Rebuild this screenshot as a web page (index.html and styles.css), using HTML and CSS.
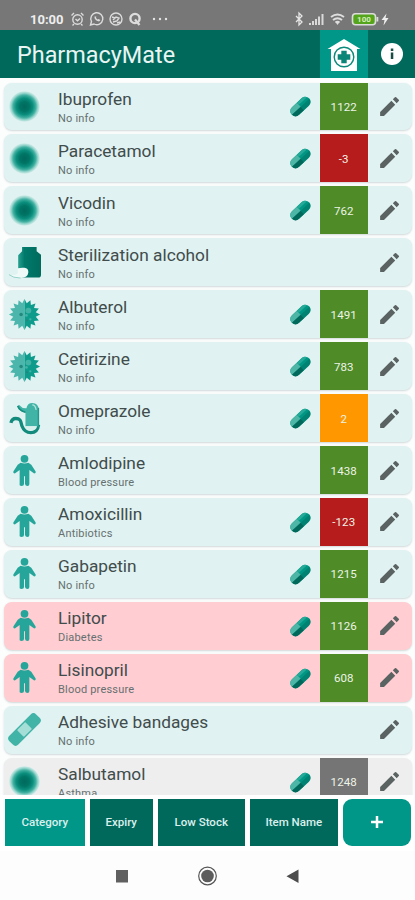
FILE: index.html
```html
<!DOCTYPE html>
<html lang="en">
<head>
<meta charset="utf-8">
<title>PharmacyMate</title>
<link rel="stylesheet" href="styles.css">
</head>
<body>
<svg class="defs" width="0" height="0" aria-hidden="true">
  <defs>
    <radialGradient id="dotfill">
      <stop offset="0" stop-color="#00695c"/><stop offset=".32" stop-color="#007566"/>
      <stop offset=".55" stop-color="#0b8f7e"/><stop offset=".74" stop-color="#41b0a1"/>
      <stop offset=".88" stop-color="#9bd7cf"/><stop offset="1" stop-color="#d2edea"/>
    </radialGradient>
    <linearGradient id="jar"><stop offset="0" stop-color="#26a08f"/><stop offset=".28" stop-color="#00796b"/><stop offset="1" stop-color="#006b5d"/></linearGradient>
    <symbol id="dot" viewBox="0 0 34 34"><circle cx="17" cy="17" r="15.800" fill="url(#dotfill)"/></symbol>
    <symbol id="bottle" viewBox="0 0 34 34">
      <path fill="url(#jar)" d="M14.500 1h15v4.500l4.500 3.500v20.500q0 3-3 3H13q-2.500 0-2.500-3V9.500l4-4z"/>
      <path fill="#eef9f8" d="M1 29q4 2 9-.5V23q4-1 7-.5 4 .5 4 4.500-.5 5.500-8 6-8 0-12-4z"/>
      <path fill="none" stroke="#7cc7be" stroke-width=".8" d="M1 29.500q4 3.500 12 3.500"/>
    </symbol>
    <symbol id="virus" viewBox="0 0 34 34">
      <path fill="#4db6ac" transform="matrix(-1 0 0 1 34 0)" d="M17 1l2.300 4.400L23.100 2.200l.5 5 4.700-1.500-1.500 4.700 5 .5-3.200 3.800L33 17l-4.400 2.300 3.200 3.800-5 .5 1.500 4.700-4.700-1.500-.5 5-3.800-3.200L17 33z"/>
      <path fill="#0d9c8c" d="M17 1l2.300 4.400L23.100 2.200l.5 5 4.700-1.500-1.500 4.700 5 .5-3.200 3.800L33 17l-4.400 2.300 3.200 3.800-5 .5 1.500 4.700-4.700-1.500-.5 5-3.800-3.200L17 33z"/>
      <g fill="#22897e"><circle cx="13.500" cy="17" r="1.800"/><circle cx="19.500" cy="23" r="1.200"/></g>
      <g fill="#43b3a6"><circle cx="21" cy="13" r="3"/><circle cx="19" cy="18" r="1.400"/><circle cx="23" cy="22" r="1.200"/></g>
    </symbol>
    <symbol id="stomach" viewBox="0 0 34 34">
      <path fill="none" stroke="#128a7c" stroke-width="3.400" d="M3 21.500Q4 17 8 17c6 0 5 4 6.500 8q2.500 6.500 9 6.500 7 0 8-8"/>
      <path fill="#42b4a7" d="M18 11q-2-.5-4.500-1.500-3-1.500-4-5l2-1.500Q15 7 19 6.500q1-5.500 6-5.500 6.500 0 6.500 7v17H18z"/>
      <path fill="none" stroke="#188f82" stroke-width="1.700" d="M10 4q2 5 8 6.500"/>
      <path fill="#d9f1ee" d="M18 25h12q-1 4.500-6 4.500T18 25z"/>
      <path fill="none" stroke="#219a8d" stroke-width="1.500" d="M31.300 6v20"/>
      <path fill="none" stroke="#b4e2dc" stroke-width="1.300" d="M25 3q3 0 4 5"/>
    </symbol>
    <symbol id="person" viewBox="0 0 34 34">
      <circle cx="17" cy="5" r="4" fill="#26a69a"/>
      <path fill="#26a69a" d="M13 9q4 1.500 8 0l3 2 4.500 7q.5 2-1.500 2l-5-3.500V31q0 2-2 2t-2.500-2v-8h-1v8q0 2-2.500 2t-2-2V16.500L7 20q-2 0-1.500-2l4.500-7z"/>
    </symbol>
    <symbol id="bandage" viewBox="0 0 34 34">
      <g transform="rotate(-45 17 17)"><rect x="-2.500" y="10.500" width="39" height="13" rx="4" fill="#42b3a7"/><rect x="11" y="12" width="12" height="10" rx="1" fill="#a5ded7"/></g>
    </symbol>
    <symbol id="pill" viewBox="0 0 24 24">
      <g transform="rotate(-43 12 12)"><rect x="-.4" y="6.500" width="24.800" height="10.800" rx="5.400" fill="#009684"/>
      <path fill="#006d60" d="M12 12.300h12.300q-.5 5-5.400 5H12z" opacity=".5"/>
      <path fill="#4db6a6" d="M12 6.500H5q-5.400 0-5.400 5.300v.5H12z"/><path fill="#00695c" d="M12 12.300H-.4q.5 5 5.400 5h7z"/>
      <path fill="#25a998" d="M12 6.500h7q3.200 0 4.600 3H12z"/></g>
    </symbol>
    <symbol id="pencil" viewBox="0 0 24 24"><path fill="#5b6262" d="M3 17.300V21h3.700L17.500 10.200 13.800 6.500zM20.900 6.800q.6-.6 0-1.200l-2.500-2.500q-.6-.6-1.200 0l-2 2 3.700 3.700z"/></symbol>
  </defs>
</svg>

<div class="status">
  <span class="clock">10:00</span>
  <svg class="left-icons" viewBox="0 0 100 16" fill="none" stroke="#dcdcdc" stroke-width="1.400">
    <circle cx="7.500" cy="8.500" r="4.700"/><path d="M1.500 4.500L4 2M11 2l2.500 2.500M5.500 8l2 1.800L10 7.500M4 13l-1.500 1.500M11 13l1.500 1.500"/>
    <path d="M20.500 14l1-3.500a6 6 0 1 1 2.500 2.500z"/><path d="M24.500 5.500q-.5 3.500 4.500 5l1.500-1.500-2-1-1 .5-1.500-1.500.3-1.500z" fill="#dcdcdc" stroke="none"/>
    <circle cx="46" cy="8" r="6"/><path d="M43 9l3-3 3 1-2 3-4 1M42 6l3 1M47 12l3-1"/>
    <circle cx="65" cy="7.500" r="4.600" stroke-width="2.400"/><path d="M65 8.500l4.500 5.500" stroke-width="2.300"/>
    <g fill="#e4e4e4" stroke="none"><circle cx="84" cy="8" r="1.200"/><circle cx="90" cy="8" r="1.200"/><circle cx="96" cy="8" r="1.200"/></g>
  </svg>
  <svg class="right-icons" viewBox="0 0 96 16">
    <path d="M2 5l6 6-3 3V2l3 3-6 6" fill="none" stroke="#e6e6e6" stroke-width="1.300"/>
    <g fill="#d9d9d9"><path d="M15 12h2v2h-2zM18 10h2v4h-2zM21 8h2v6h-2zM24 5.500h2v8.500h-2zM27.500 3h2v11h-2z"/></g>
    <g fill="none" stroke="#dedede" stroke-width="1.900"><path d="M37 6q6.500-5 13 0M39 9q4.500-3.500 9 0M41.500 11.500q2-1.500 4 0"/></g><path d="M41.500 11h4l-2 3z" fill="#dedede"/>
    <rect x="58.500" y="2.800" width="23" height="11" rx="3" fill="#55a51c" stroke="#dcdcdc" stroke-width="1.600"/><path d="M82.500 6h1.800v4.500h-1.800z" fill="#dcdcdc"/>
    <text x="70" y="11.300" text-anchor="middle" class="battery">100</text>
    <path d="M92.500 2.500L87.500 9h3l-1 5.500L94.500 7h-3z" fill="#eee"/>
  </svg>
</div>

<header class="bar">
  <h1>PharmacyMate</h1>
  <div class="home"><svg viewBox="0 0 34 34"><path fill="#fff" d="M17 1L33.500 11H30v22H4V11H.5z"/><circle cx="17" cy="19" r="9.800" fill="none" stroke="#0b897b" stroke-width="1.400"/><path fill="#0b8577" d="M14.300 12.700h5.400v3.600h3.600v5.400h-3.600v3.600h-5.400v-3.600h-3.600v-5.400h3.600z"/></svg></div>
  <div class="info"><svg viewBox="0 0 22 22"><circle cx="11" cy="11" r="11" fill="#fff"/><path d="M9.800 5.500h2.500V8H9.800zM9.800 9.500h2.500V16H9.800z" fill="#174d45"/></svg></div>
</header>

<main class="list" id="list"></main>

<div class="filters">
  <button class="category active">Category</button>
  <button class="expiry">Expiry</button>
  <button class="stock">Low Stock</button>
  <button class="name">Item Name</button>
  <button class="add" aria-label="Add"><svg viewBox="0 0 14 14"><path d="M7 1v12M1 7h12" stroke="#fff" stroke-width="2.500"/></svg></button>
</div>

<nav class="sysnav">
  <svg viewBox="0 0 415 50"><rect x="116" y="19" width="12" height="12.500" fill="#606060"/><circle cx="207.500" cy="25" r="8.800" fill="none" stroke="#555" stroke-width="1.200"/><circle cx="207.500" cy="25" r="6.300" fill="#5c5c5c"/><path d="M298.500 18.500v13.500L286.500 25.300z" fill="#4c4c4c"/></svg>
</nav>
<script src="app.js"></script>
</body>
</html>
```

FILE: styles.css
```css
* { box-sizing: border-box; }
body {
  margin: 0;
  width: 415px;
  height: 900px;
  overflow: hidden;
  display: flex;
  flex-direction: column;
  background: #fff;
  font-family: Roboto, sans-serif;
}
.defs { display: block; position: absolute; }
svg { display: block; }

.status {
  height: 30px;
  flex: none;
  display: flex;
  align-items: flex-start;
  padding: 11px 25px 0 30px;
  background: #777;
}
.clock { width: 35px; font-size: 13px; line-height: 17px; font-weight: 700; color: #eee; }
.left-icons { width: 100px; height: 16px; margin-left: 5px; }
.right-icons { width: 96px; height: 16px; margin-left: auto; }
.battery { font: 700 8px Roboto, sans-serif; fill: #d5edbd; }

.bar {
  height: 47.500px;
  flex: none;
  display: flex;
  align-items: center;
  background: #00695c;
}
.bar h1 { flex: 1; margin: 0; padding: 3px 0 0 17px; font-size: 23.400px; font-weight: 400; line-height: 28px; color: #e8f5f3; }
.home { width: 48px; height: 100%; display: grid; place-items: center; background: #009688; }
.home svg { width: 34px; height: 34px; margin-top: 2px; }
.info { width: 47px; display: grid; place-items: center; }
.info svg { width: 22px; height: 22px; margin-top: 1px; }

.list {
  height: 717px;
  flex: none;
  overflow: hidden;
  display: flex;
  flex-direction: column;
  gap: 4px;
  padding: 5px 3px 0 4px;
  background: #fcfefe;
}
.card {
  flex: none;
  height: 47.950px;
  display: flex;
  align-items: center;
  border-radius: 8px;
  background: #e0f2f1;
  box-shadow: 0 1px 2px rgba(60, 80, 80, .22);
}
.card.expired { background: #ffcdd2; }
.card.inactive { background: #eee; }
.kind { width: 33px; height: 33px; margin: 0 1px 0 4px; }
.text { flex: 1; padding: 3px 0 0 16px; }
.title { font-size: 17.300px; line-height: 21px; font-weight: 400; color: #414c4c; white-space: nowrap; }
.note { font-size: 11px; line-height: 17px; letter-spacing: .2px; color: #667070; }
.pill { width: 23px; height: 23px; margin: 1px 8px 0 0; }
.count { width: 47.500px; height: 100%; display: grid; place-items: center; padding-top: 1px; font-size: 11.500px; letter-spacing: .1px; color: #edf4e8; }
.green { background: #4f8b27; }
.red { background: #b71c1c; }
.orange { background: #ff9800; }
.grey { background: #757575; }
.edit { width: 44.500px; display: grid; place-items: center; }
.edit svg { width: 25px; height: 25px; margin-right: 1px; }

.filters {
  height: 56px;
  flex: none;
  display: flex;
  gap: 5px;
  padding: 4px 4px 4.500px 5px;
  background: #fff;
}
.filters button {
  border: 0;
  padding: 0;
  background: #00695c;
  color: #dcefed;
  font: 500 11.500px Roboto, sans-serif;
  display: grid;
  place-items: center;
}
.filters .active, .filters .add { background: #009688; }
.category { width: 79.500px; }
.expiry { width: 63.500px; }
.stock { width: 86.500px; }
.name { width: 88.500px; }
.filters .add { width: 68px; border-radius: 9px; }
.add svg { width: 14px; height: 14px; }

.sysnav { height: 49.500px; flex: none; background: #fdfdfd; }
.sysnav svg { width: 415px; height: 50px; }
```

FILE: app.js
```js
const items = [
  ["dot", "Ibuprofen", "No info", 1, "1122", "green"],
  ["dot", "Paracetamol", "No info", 1, "-3", "red"],
  ["dot", "Vicodin", "No info", 1, "762", "green"],
  ["bottle", "Sterilization alcohol", "No info", 0],
  ["virus", "Albuterol", "No info", 1, "1491", "green"],
  ["virus", "Cetirizine", "No info", 1, "783", "green"],
  ["stomach", "Omeprazole", "No info", 1, "2", "orange"],
  ["person", "Amlodipine", "Blood pressure", 0, "1438", "green"],
  ["person", "Amoxicillin", "Antibiotics", 1, "-123", "red"],
  ["person", "Gabapetin", "No info", 1, "1215", "green"],
  ["person", "Lipitor", "Diabetes", 1, "1126", "green", "expired"],
  ["person", "Lisinopril", "Blood pressure", 1, "608", "green", "expired"],
  ["bandage", "Adhesive bandages", "No info", 0],
  ["dot", "Salbutamol", "Asthma", 1, "1248", "grey", "inactive"]
];

document.getElementById("list").innerHTML = items.map(([kind, title, note, pill, count, color, state = ""]) => `
  <article class="card ${state}">
    <svg class="kind"><use href="#${kind}"/></svg>
    <div class="text"><div class="title">${title}</div><div class="note">${note}</div></div>
    ${pill ? '<svg class="pill"><use href="#pill"/></svg>' : ""}
    ${count ? `<div class="count ${color}">${count}</div>` : ""}
    <div class="edit"><svg><use href="#pencil"/></svg></div>
  </article>`).join("");
```
